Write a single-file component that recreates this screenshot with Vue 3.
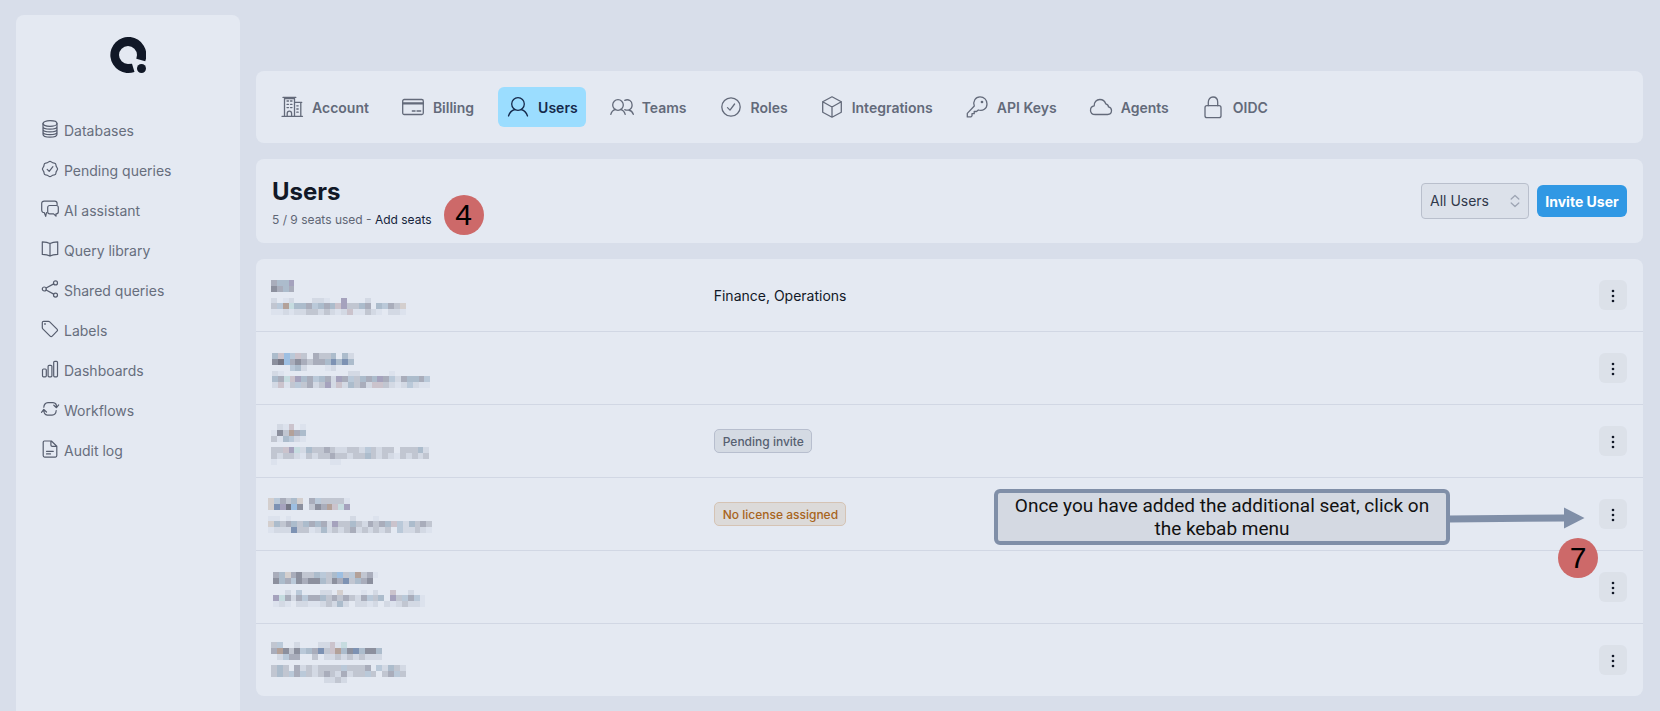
<script setup>
import { ref } from 'vue'

const nav = [
  { label: 'Databases', icon: '<ellipse cx="9" cy="3.5" rx="7" ry="2.8"/><path d="M2 3.5v10.8c0 1.6 3.1 2.9 7 2.9s7-1.3 7-2.9V3.5M2 6.4c0 1.5 3.1 2.7 7 2.7s7-1.2 7-2.7M2 9.2c0 1.5 3.1 2.7 7 2.7s7-1.2 7-2.7M2 11.9c0 1.5 3.1 2.7 7 2.7s7-1.2 7-2.7"/>' },
  { label: 'Pending queries', icon: '<path d="M10.3 1.9c1 1 1.6 1.200 3 1.200 1.100.1 1.600.8 1.600 1.700 0 1.300.3 1.900 1.100 2.800.8.9.8 1.900 0 2.800-.8.9-1.100 1.500-1.100 2.800 0 1-.6 1.600-1.600 1.700-1.400.1-2 .3-3 1.200-.8.7-1.800.7-2.600 0-1-.9-1.600-1.100-3-1.200-1-.1-1.600-.7-1.600-1.700 0-1.300-.3-1.900-1.100-2.800-.8-.9-.8-1.900 0-2.800.8-.9 1.100-1.500 1.100-2.800 0-.9.5-1.600 1.600-1.700 1.400 0 2-.2 3-1.200.8-.7 1.800-.7 2.600 0z"/><path d="M6.200 9.300l2 2L11.900 6.700"/>' },
  { label: 'AI assistant', icon: '<path d="M5.500 12.500L4.700 16.300 3.200 12.500C1.500 12.500.7 11.500.7 10V3.600C.7 2 1.600 1.200 3.200 1.200h10.500c1.500 0 2.400.8 2.400 2.400v1.200"/><path d="M8.700 5.500h6.600c1.300 0 2 .8 2 2v4.300c0 1.300-.7 2-2 2h-.3v2.400l-2.400-2.400-3.800.1c-1.500 0-2.100-.8-2.100-2.100V7.500c0-1.200.8-2 2-2z"/>' },
  { label: 'Query library', icon: '<path d="M9 3.500C7 2.200 4.500 1.800 1.300 1.800v12.600c3.200 0 5.700.4 7.700 1.700 2-1.300 4.500-1.700 7.700-1.700V1.800C13.500 1.800 11 2.200 9 3.500zM9 3.500v12.600"/>' },
  { label: 'Shared queries', icon: '<circle cx="3.300" cy="9" r="2"/><circle cx="14.500" cy="2.900" r="2"/><circle cx="14.500" cy="15.100" r="2"/><path d="M5.100 8l7.600-4.100M5.100 10l7.600 4.100"/>' },
  { label: 'Labels', icon: '<path d="M1.300 2.700c0-.9.5-1.400 1.400-1.400h4.800c.5 0 .9.200 1.200.5l7.300 7.300c.7.7.7 1.400 0 2.100l-4.800 4.900c-.7.700-1.400.700-2.100 0L1.800 8.800c-.3-.3-.5-.7-.5-1.200z"/><circle cx="4" cy="4" r=".3"/>' },
  { label: 'Dashboards', icon: '<rect x="1.500" y="9" width="3.800" height="7.800" rx="1"/><rect x="7.100" y="5.300" width="3.800" height="11.500" rx="1"/><rect x="12.700" y="1.300" width="3.800" height="15.500" rx="1"/>' },
  { label: 'Workflows', icon: '<path d="M2.800 7.200C3 4.300 4.500 2.800 7 2.600h5c2.300.2 3.500 1.500 3.500 3.800M12.800 5.200l2.700 2.500 2.200-2.800M15.200 10.500c-.2 2.900-1.700 4.400-4.200 4.600H6.300c-2.300-.2-3.500-1.500-3.500-4.800M.5 12.300l2.300-2.800 2.700 2.500"/>' },
  { label: 'Audit log', icon: '<path d="M2.200 2.200c0-.7.5-1.200 1.200-1.200h7l5.400 5.300v9.300c0 .9-.5 1.500-1.300 1.500H3.600c-.9 0-1.400-.6-1.400-1.500zM9.900 1v3.900c0 .9.5 1.400 1.400 1.400h4.300M5.500 11.300h6.800M5.500 13.900h4"/>' },
]

const tabs = [
  { label: 'Account', icon: '<path d="M4.500 21.300V3.500h10v17.800M3 2.400h12.800M14.500 7.400h7.200M20.800 7.400v13.900M2 21.300h20.500M7.200 21.300v-2.800c0-1.600 1-2.400 2.200-2.400s2.200.8 2.200 2.400v2.800"/><path d="M7 6h1.500M10.500 6H12M7 9.300h1.500M10.500 9.300H12M7 12.600h1.500M10.500 12.600H12M16.800 10.800h1.400M16.800 14h1.400M16.800 17.200h1.400"/>' },
  { label: 'Billing', icon: '<rect x="1.700" y="4.500" width="20.600" height="15" rx="1.500"/><path d="M1.700 7.900h20.600M1.700 8.800h20.600M11.300 16h2.800M16 16h3.700"/>' },
  { label: 'Users', icon: '<circle cx="12" cy="9" r="6.300"/><path d="M2.500 21c1-3.500 3.200-5.600 6.400-6.500M21.500 21c-1-3.500-3.200-5.600-6.400-6.500"/>', active: true },
  { label: 'Teams', icon: '<circle cx="8" cy="10" r="5.300"/><path d="M.8 19.300c.7-2.700 2.300-4.300 4.700-5M15.200 19.300c-.7-2.700-2.300-4.300-4.700-5M14.700 5.300c4-1.700 7.400.9 7.400 4.600 0 2.200-1.300 4.200-3.500 5.100 2.400.5 3.900 1.800 4.700 4.300M14.800 14.600c1 .6 2 .7 3 .5"/>' },
  { label: 'Roles', icon: '<circle cx="12" cy="12" r="9.200"/><path d="M8.500 12.600l2.500 2.500L15.600 9"/>' },
  { label: 'Integrations', icon: '<path d="M12 1.800l9.300 5v10.400l-9.300 5-9.300-5V6.800zM2.700 6.800L12 12l9.300-5.200M12 12v10.200"/>' },
  { label: 'API Keys', icon: '<path d="M9.300 11C7.700 6.500 10.300 1.900 15 1.900c4.100 0 7 3 7 7 0 4.800-4.200 7.600-8.700 6.100l-1.800 1.500H9.200v2.200H7v2.200l-1 1H2.300v-3.500z"/><circle cx="17" cy="7" r=".7"/>' },
  { label: 'Agents', icon: '<path d="M6.300 19.500C3.300 19.500 1.500 17.700 1.500 15.200c0-2.300 1.500-4 3.700-4.300C5 7 7.600 4.500 10.800 4.500c3 0 5.200 1.800 5.900 4.300 1.700.4 2.700 1.500 2.800 3.100 1.900.5 3 1.900 3 3.700 0 2.200-1.600 3.900-3.900 3.900z"/>' },
  { label: 'OIDC', icon: '<rect x="4" y="10.700" width="16" height="12" rx="2"/><path d="M7.300 10.700V7.300c0-3.200 1.900-5.300 4.700-5.300s4.700 2.100 4.700 5.300v3.400"/>' },
]

/* Redacted identities: each character is one mosaic cell, "." is empty. */
const shades = {
  a: '#d3d9e4', b: '#c1c6d1', c: '#a9adbb', d: '#8c909e', e: '#757785', f: '#acbccc',
  g: '#bac9d9', h: '#9dbfe2', i: '#d4cfce', j: '#b3a199', k: '#a5a2bd', l: '#c6dce0',
  m: '#dce2ed', n: '#7d92b3', p: '#cbc3cc',
}
const PITCH = 5.86
const mosaic = (x0, y0, lines) =>
  lines.flatMap((line, r) =>
    [...line].flatMap((key, c) => {
      if (!shades[key]) return []
      const x = Math.round(c * PITCH)
      const y = Math.round(r * PITCH)
      return [{
        x: x0 + x,
        y: y0 + y,
        w: Math.round((c + 1) * PITCH) - x,
        h: Math.round((r + 1) * PITCH) - y,
        fill: shades[key],
      }]
    })
  )

const users = [
  { teams: 'Finance, Operations', cells: mosaic(3, 9, ['cffk', 'dcfc', '', 'a.ma...aam..k...a', 'bgjlffcgfcfpkbbfc.fgcbi', 'mmamaabbabamapmmbam.aam']) },
  { cells: mosaic(4, 9, ['fphgpb.cbbf.fa', 'dehcdcbccfnfnf', '...gfa...ma', 'am...........aa.....m', 'fclpkfcgfcakcgbfcfkcgacffcg', 'apmbgbcabkapafbcappbamagamm']) },
  { badge: 'Pending invite', tone: 'neutral', cells: mosaic(3, 7, ['.amp.m', 'mdbjcf', 'bmfgam', '', 'bbpklafbbcbaabbagbabb.bbbfa', 'babbambabbcbbabbfbabambabab', 'm.........mm']) },
  { badge: 'No license assigned', tone: 'warning', callout: true, cells: mosaic(0, 8, ['igcbfi.cgbbbbm', 'inkehd.bdcjplk', '', 'mm.m..........a...m', 'ifbcfbfcfcakbbfbacbcfpgafbcb', 'maaanbbmafababcababab.gaabam']) },
  { cells: mosaic(5, 9, ['cficdbbfgbfhbgjbcm', 'dfcgdcddfbdcnbfcd', '', '..a.g...aa.i...m.a..p..a', 'klcacgccfbcbcbacgbf.kbgcgm', 'mam.aammabafa.aama.amabaam']) },
  { cells: mosaic(3, 6, ['bg..a...aapml', 'cjdbdgfcnbpjfdnfddf', '.agcc..b.aabababaaa', '', 'bfb.cababbbbgbbbc.gafba', 'bfbgcgbabcbacabbgb.bcgb', '.........aaba']) },
]

const filter = ref('all')
</script>

<template>
  <div class="app">
    <aside class="sidebar">
      <svg class="logo" viewBox="0 0 36 36" aria-hidden="true">
        <path d="M35.200 24.300A18 18 0 1 0 24.500 34.900L22 26.700 18 27A9 9 0 1 1 27 18L26.300 21.700z" />
        <circle cx="31.500" cy="31.500" r="4.500" />
      </svg>
      <nav class="menu">
        <a v-for="item in nav" :key="item.label" href="#" class="menu-item">
          <svg viewBox="0 0 18 18" class="menu-icon" aria-hidden="true" v-html="item.icon"></svg>
          <span>{{ item.label }}</span>
        </a>
      </nav>
    </aside>

    <main class="main">
      <nav class="card tabs">
        <a v-for="tab in tabs" :key="tab.label" href="#" class="tab" :class="{ active: tab.active }">
          <svg viewBox="0 0 24 24" class="tab-icon" aria-hidden="true" v-html="tab.icon"></svg>
          <span>{{ tab.label }}</span>
        </a>
      </nav>

      <header class="card header">
        <div class="heading">
          <h1>Users</h1>
          <p>5 / 9 seats used - <a href="#">Add seats</a></p>
          <span class="step step-four">4</span>
        </div>
        <div class="actions">
          <div class="select">
            <select v-model="filter" aria-label="All Users">
              <option value="all">All Users</option>
            </select>
            <svg viewBox="0 0 10 14" aria-hidden="true"><path d="M1.200 5L5 1.500 8.800 5M1.200 9L5 12.500 8.800 9" /></svg>
          </div>
          <button type="button" class="invite">Invite User</button>
        </div>
      </header>

      <section class="card list">
        <table>
          <tbody>
            <tr v-for="(user, i) in users" :key="i">
              <td class="identity">
                <svg width="168" height="48" viewBox="0 0 168 48" shape-rendering="crispEdges" aria-hidden="true">
                  <rect v-for="(c, n) in user.cells" :key="n" :x="c.x" :y="c.y" :width="c.w" :height="c.h" :fill="c.fill" />
                </svg>
              </td>
              <td class="teams">
                <span v-if="user.badge" class="badge" :class="user.tone">{{ user.badge }}</span>
                <span v-else class="team-names">{{ user.teams }}</span>
              </td>
              <td class="row-actions">
                <div v-if="user.callout" class="callout">
                  <p>Once you have added the additional seat, click on the kebab menu</p>
                  <svg class="arrow" width="136" height="22" viewBox="0 0 136 22" aria-hidden="true">
                    <path d="M0 8.500L115 7.500V.5L135.500 11 115 21.500V14.500L0 15.500z" />
                  </svg>
                  <span class="step step-seven">7</span>
                </div>
                <button type="button" class="kebab" aria-label="Menu">
                  <svg viewBox="0 0 4 16" width="4" height="16" aria-hidden="true">
                    <circle cx="2" cy="3" r="1.300" /><circle cx="2" cy="8" r="1.300" /><circle cx="2" cy="13" r="1.300" />
                  </svg>
                </button>
              </td>
            </tr>
          </tbody>
        </table>
      </section>
    </main>
  </div>
</template>

<style>
body {
  background: #d8deea;
}
</style>

<style scoped>
.app {
  box-sizing: border-box;
  display: flex;
  gap: 16px;
  min-height: 100vh;
  padding: 15px 17px 0 16px;
  background: #d8deea;
  color: #111827;
  font-family: Inter, "Liberation Sans", sans-serif;
  font-size: 14px;
  line-height: 20px;
}
a {
  color: inherit;
  text-decoration: none;
}
.sidebar {
  box-sizing: border-box;
  flex: 0 0 224px;
  padding: 22px 24px;
  border-radius: 8px 8px 0 0;
  background: #e4e9f2;
}
.logo {
  display: block;
  width: 36px;
  height: 36px;
  margin: 0 auto 37px;
  fill: #111827;
}
.menu {
  display: flex;
  flex-direction: column;
}
.menu-item {
  display: flex;
  align-items: center;
  gap: 5px;
  height: 40px;
  padding-left: 1px;
  color: #676e7d;
}
.menu-item span {
  padding-top: 1px;
}
.menu-icon {
  width: 18px;
  height: 18px;
  margin-bottom: 2px;
  fill: none;
  stroke: #565d6e;
  stroke-width: 1.2;
  stroke-linecap: round;
  stroke-linejoin: round;
  overflow: visible;
}
.main {
  display: flex;
  flex: 1;
  flex-direction: column;
  gap: 16px;
  min-width: 0;
  padding: 56px 0 15px;
}
.card {
  border-radius: 8px;
  background: #e4e9f2;
}
.tabs {
  display: flex;
  flex-wrap: wrap;
  gap: 16px;
  padding: 16px;
}
.tab {
  display: flex;
  align-items: center;
  gap: 8px;
  height: 40px;
  padding: 0 8px;
  border-radius: 6px;
  color: #636a7a;
  font-weight: 600;
}
.tab.active {
  background: #9bddff;
  color: #15294b;
}
.tab span {
  padding-top: 2px;
}
.tab-icon {
  width: 24px;
  height: 24px;
  fill: none;
  stroke: currentColor;
  stroke-width: 1.3;
  stroke-linecap: round;
  stroke-linejoin: round;
}
.header {
  display: flex;
  align-items: center;
  justify-content: space-between;
  padding: 15px 16px;
}
.heading {
  position: relative;
  padding-top: 2px;
}
h1 {
  margin: 0;
  font-size: 24px;
  font-weight: 700;
  line-height: 32px;
}
.heading p {
  margin: 2px 0 -2px;
  color: #5f6675;
  font-size: 12px;
}
.heading p a {
  color: #15233b;
}
.step {
  position: absolute;
  width: 40px;
  height: 40px;
  border-radius: 50%;
  background: #cd6969;
  color: #000;
  font-family: "Liberation Sans", Arial, sans-serif;
  font-size: 30px;
  line-height: 40px;
  text-align: center;
}
.step-four {
  top: 21px;
  left: calc(100% + 12px);
}
.actions {
  display: flex;
  align-items: center;
  gap: 8px;
}
.select {
  position: relative;
}
select {
  box-sizing: border-box;
  width: 108px;
  height: 36px;
  padding: 0 28px 0 8px;
  border: 1px solid #b9bfcc;
  border-radius: 4px;
  background: #dce1ea;
  color: #30384a;
  font: inherit;
  appearance: none;
}
.select svg {
  position: absolute;
  top: 11px;
  right: 9px;
  width: 10px;
  height: 14px;
  fill: none;
  stroke: #9ea5b4;
  stroke-width: 1.3;
  stroke-linecap: round;
  stroke-linejoin: round;
  pointer-events: none;
}
.invite {
  min-width: 90px;
  height: 32px;
  padding: 1px 8px 0;
  border: 0;
  border-radius: 6px;
  background: #3098e4;
  color: #fff;
  font: inherit;
  font-weight: 700;
}
table {
  width: 100%;
  border-spacing: 0;
  table-layout: fixed;
}
td {
  box-sizing: border-box;
  height: 73px;
  padding: 0;
  border-bottom: 1px solid #d1d7e4;
  vertical-align: middle;
}
tr:last-child td {
  height: 72px;
  border-bottom: 0;
}
.identity {
  width: 33%;
  padding-left: 12px;
}
.identity svg {
  display: block;
}
.team-names {
  display: block;
  padding-top: 2px;
}
.badge {
  box-sizing: border-box;
  display: inline-block;
  padding: 2px 7px 0 8px;
  height: 24px;
  border: 1px solid #b7bece;
  border-radius: 5px;
  background: #d4dae3;
  color: #566071;
  font-size: 12px;
  font-weight: 500;
  vertical-align: middle;
}
.badge.warning {
  border-color: #d5c3b4;
  background: #dcdad9;
  color: #a8641c;
}
.row-actions {
  position: relative;
  padding-right: 16px;
  text-align: right;
}
.kebab {
  display: inline-flex;
  align-items: center;
  justify-content: center;
  width: 28px;
  height: 30px;
  padding: 1px 0 0;
  border: 0;
  border-radius: 6px;
  background: #dce1e9;
  fill: #111827;
  vertical-align: middle;
}
.callout {
  position: absolute;
  top: 11px;
  right: 193px;
  box-sizing: border-box;
  width: 456px;
  padding: 1px 12px;
  border: 4px solid #808fa8;
  border-radius: 6px;
  background: #d4d9e2;
  color: #111;
  font-family: Roboto, "Liberation Sans", sans-serif;
  font-size: 19px;
  line-height: 23px;
  text-align: center;
}
.callout p {
  margin: 0;
}
.arrow {
  position: absolute;
  top: 14px;
  left: 451px;
  fill: #808fa8;
}
.step-seven {
  top: 45px;
  left: 560px;
}
</style>
